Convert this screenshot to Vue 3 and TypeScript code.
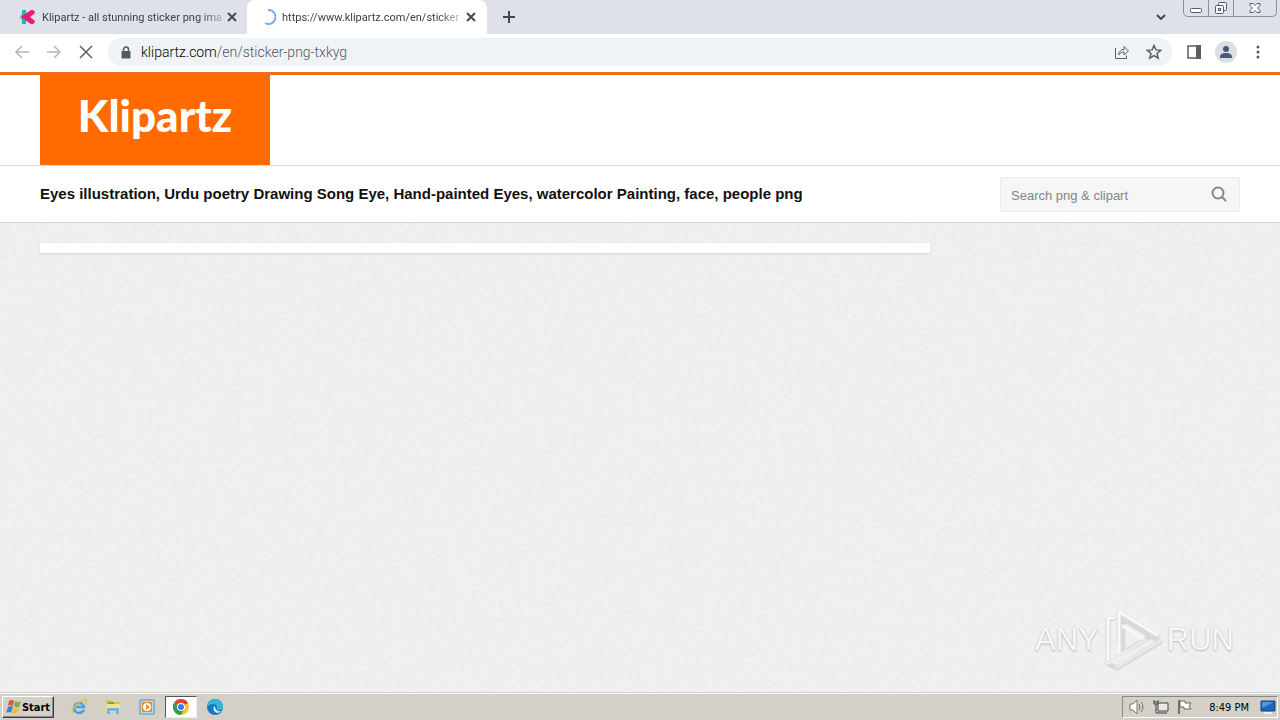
<script setup lang="ts">
import { ref } from 'vue'

const query = ref('')
const launchers = ['Internet Explorer', 'File Explorer', 'Media Player', 'Chrome', 'Edge']
</script>

<template>
  <div class="desktop">
    <header class="tabs">
      <div class="tab">
        <svg class="fav" viewBox="0 0 16 16"><path d="M2 1h4v14H2V11L0 8l2-3z" fill="#20b8b5" /><path d="M5 5 11 1h2q2 1 2 3l-5 4 5 4q0 2-2 3h-2L2 9V7z" fill="#ec1b7b" /></svg>
        <span class="tab-title">Klipartz - all stunning sticker png ima</span>
        <button class="close" aria-label="Close tab"><svg viewBox="0 0 10 10"><path d="m1 1 8 8M9 1 1 9" /></svg></button>
      </div>
      <div class="tab active">
        <svg class="fav" viewBox="0 0 16 16"><path d="M8 1a7 7 0 1 1-3 13" fill="none" stroke="#79a9e8" stroke-width="2" /></svg>
        <span class="tab-title">https://www.klipartz.com/en/sticker</span>
        <button class="close" aria-label="Close tab"><svg viewBox="0 0 10 10"><path d="m1 1 8 8M9 1 1 9" /></svg></button>
      </div>
      <button class="plus" aria-label="New tab"><svg viewBox="0 0 12 12"><path d="M6 0v12M0 6h12" /></svg></button>
      <button class="chev" aria-label="Search tabs"><svg viewBox="0 0 10 6"><path d="m1 1 4 4 4-4" /></svg></button>
      <div class="win">
        <button aria-label="Minimize"><svg viewBox="0 0 14 14"><rect x="1.500" y="7.500" width="11" height="4" rx="1" fill="#fff" stroke="#555b66" /></svg></button>
        <button aria-label="Restore"><svg viewBox="0 0 14 14"><g fill="#f5f6f8" stroke="#555b66"><rect x="4.500" y="1.500" width="8" height="8" rx="1" /><rect x="1.500" y="4.500" width="8" height="8" rx="1" /><rect x="4.500" y="7.500" width="2" height="2" /></g></svg></button>
        <button class="wide" aria-label="Close window"><svg viewBox="0 0 14 14"><path d="M2 2.500h3l2 2 2-2h3v2L9.500 7l2.500 2.500v2H9l-2-2-2 2H2v-2L4.500 7 2 4.500z" fill="#fff" stroke="#555b66" /></svg></button>
      </div>
    </header>

    <nav class="toolbar">
      <button class="nav dim" aria-label="Back"><svg viewBox="0 0 16 16"><path d="M15 8H2M8 2 2 8l6 6" /></svg></button>
      <button class="nav dim" aria-label="Forward"><svg viewBox="0 0 16 16"><path d="M1 8h13M8 2l6 6-6 6" /></svg></button>
      <button class="nav" aria-label="Stop"><svg viewBox="0 0 16 16"><path d="m2 2 12 12M14 2 2 14" /></svg></button>
      <div class="address">
        <svg class="lock" viewBox="0 0 10 13"><path d="M2.500 6V3.500a2.500 2.500 0 0 1 5 0V6" fill="none" stroke="#555960" stroke-width="1.500" /><rect x="0.500" y="5" width="9" height="7.500" rx="1" fill="#555960" /></svg>
        <a href="#" class="url"><b>klipartz.com</b>/en/sticker-png-txkyg</a>
        <button class="nav" aria-label="Share"><svg viewBox="0 0 16 16" class="thin"><path d="M1.500 4v10.500h11v-3M4.500 11C5 7 7 5.500 10 5.500V2.500L14.500 7 10 11V8C7.500 8 6 9 4.500 11z" /></svg></button>
        <button class="nav" aria-label="Bookmark"><svg viewBox="0 0 16 16"><path d="m8 1.500 1.900 4.400 4.800.4L11 9.400l1.200 4.700L8 11.600l-4.200 2.500L5 9.400 1.300 6.300l4.800-.4z" /></svg></button>
      </div>
      <button class="nav" aria-label="Side panel"><svg viewBox="0 0 16 16"><path d="M2 2h12v12H2z" /><path d="M10 1h5v14h-5z" fill="#5a5d63" stroke="none" /></svg></button>
      <button class="avatar" aria-label="Profile"><svg viewBox="0 0 22 22"><circle cx="11" cy="11" r="11" fill="#dbdfe5" /><circle cx="11" cy="8" r="3" fill="#4a5878" /><path d="M5 16q0-4 6-4t6 4v1H5z" fill="#4a5878" /></svg></button>
      <button class="nav" aria-label="Menu"><svg viewBox="0 0 16 16"><g fill="#55585e" stroke="none"><circle cx="8" cy="3" r="1.500" /><circle cx="8" cy="8" r="1.500" /><circle cx="8" cy="13" r="1.500" /></g></svg></button>
    </nav>

    <div class="brandbar"><a href="#" class="logo">Klipartz</a></div>
    <div class="titlebar">
      <h1>Eyes illustration, Urdu poetry Drawing Song Eye, Hand-painted Eyes, watercolor Painting, face, people png</h1>
      <form class="search" @submit.prevent>
        <input v-model="query" type="text" aria-label="Search png &amp; clipart" placeholder="Search png &amp; clipart" />
        <button aria-label="Search"><svg viewBox="0 0 16 16"><circle cx="7" cy="7" r="5.500" /><path d="m11 11 4 4" /></svg></button>
      </form>
    </div>

    <main>
      <svg class="grain" aria-hidden="true">
        <filter id="paper" x="0" y="0" width="100%" height="100%" color-interpolation-filters="sRGB">
          <feTurbulence type="fractalNoise" baseFrequency="0.25" numOctaves="3" seed="4" />
          <feColorMatrix values="0.040 0 0 0 0.918  0.040 0 0 0 0.918  0.040 0 0 0 0.918  0 0 0 0 1" />
        </filter>
        <rect width="100%" height="100%" filter="url(#paper)" />
      </svg>
      <div class="card"></div>
      <div class="watermark">
        <span>ANY</span>
        <svg viewBox="0 0 62 64">
          <g fill="none" stroke-linejoin="round" stroke-linecap="round">
            <g stroke="#d9d9d9" stroke-width="5"><path d="M17 34V5l38 23" /><path d="M11 11H6v45l9 4 43-26-37-23v34l28-17" /></g>
            <g stroke="#f8f8f8" stroke-width="3"><path d="M17 48V4l38 23" /><path d="M11 10H6v45l37-23-22-14" /></g>
            <g stroke="#e9e9e9" stroke-width="3"><path d="M15 59l43-26" /><path d="M6 54l37-22" /></g>
          </g>
        </svg>
        <span>RUN</span>
      </div>
    </main>

    <footer class="taskbar">
      <button class="start"><svg viewBox="0 0 16 16"><path d="M3 2q3-2 5 0L7 7Q4 5 2 7z" fill="#e9542b" /><path d="M9 2q3 2 6 0l-2 6q-3 1-5-1z" fill="#72b64a" /><path d="M2 8q3-2 5 0l-2 6q-2-2-5 0z" fill="#3b83d0" /><path d="M8 8q2 2 5 1l-2 5q-3 2-5 0z" fill="#f3bd25" /></svg>Start</button>
      <button v-for="(name, i) in launchers" :key="name" class="launch" :class="{ pressed: i === 3 }" :aria-label="name">
        <svg v-if="i === 0" viewBox="0 0 16 16"><path d="M13 11q-2 3-5 3a5 5 0 1 1 5-6H5" fill="none" stroke="#42a5e0" stroke-width="2.600" /><path d="M2 14Q-1 12 5 6q7-6 10-5 1 1-1 4" fill="none" stroke="#e9bd36" stroke-width="1.400" /></svg>
        <svg v-else-if="i === 1" viewBox="0 0 16 16"><path d="M1 1h5l1 2h8v10H1z" fill="#e3bd55" /><path d="M1 5h14v8H1z" fill="#f6e08b" /><path d="M2 15V9h12v6h-3v-3H5v3z" fill="#71b8dc" /><path d="M3 4h6" stroke="#59a967" stroke-width="2" /></svg>
        <svg v-else-if="i === 2" viewBox="0 0 16 16"><path d="M1 1h14v14H1z" fill="#b9dcf0" stroke="#4c91c0" /><path d="M3 3h10v10H3z" fill="#f18820" /><circle cx="8" cy="8" r="4" fill="#fff" /><path d="m7 5 4 3-4 3z" fill="#f18820" /></svg>
        <svg v-else-if="i === 3" viewBox="0 0 16 16"><circle cx="8" cy="8" r="8" fill="#f7c52c" /><path d="M8 8 1 4a8 8 0 0 1 14 0z" fill="#df4435" /><path d="M8 8 1 4a8 8 0 0 0 7 12l3-6z" fill="#2e9c56" /><circle cx="8" cy="8" r="4" fill="#fff" /><circle cx="8" cy="8" r="3" fill="#3f7de0" /></svg>
        <svg v-else viewBox="0 0 16 16"><circle cx="8" cy="8" r="8" fill="#1679bf" /><path d="M0 8a8 8 0 0 1 16 0q0 3-4 3-3 0-2-3 0-3-4-3-4 0-6 3z" fill="#35b5d4" /><path d="M7 7q-2 5 3 7 3 0 4-2-5 1-6-4z" fill="#dceef2" /></svg>
      </button>
      <div class="tray">
        <svg viewBox="0 0 16 16"><path d="M1 5h3l4-4v14l-4-4H1z" fill="#fff" stroke="#777" /><path d="M10 5q2 3 0 6m2-8q4 5 0 10" fill="none" stroke="#777" /></svg>
        <svg viewBox="0 0 16 16"><path d="M5 4h10v8H5z" fill="#e9e9e5" stroke="#444" /><path d="M7 14h7M1 1v4h4V1M3 5v9h4M1 3h4" fill="none" stroke="#444" /></svg>
        <svg viewBox="0 0 16 16"><path d="M2 1v14" stroke="#555" stroke-width="1.500" /><path d="M3 2h5v2h6l-2 3 2 3H7V8H3z" fill="#fff" stroke="#666" /></svg>
        <time>8:49 PM</time>
        <svg viewBox="0 0 16 16"><path d="M1 2h14v10H1z" fill="#1b65bd" stroke="#18427e" /><path d="M2 3h12L2 9z" fill="#5595dc" /><path d="M4 14h8" stroke="#eee" stroke-width="2" /></svg>
      </div>
    </footer>
  </div>
</template>

<style>
body { margin: 0; }
</style>

<style scoped>
* { box-sizing: border-box; }
button { border: 0; padding: 0; background: none; font: inherit; color: inherit; display: flex; align-items: center; justify-content: center; flex: none; }
svg { display: block; flex: none; }
.desktop { min-height: 100vh; display: flex; flex-direction: column; font-family: "Liberation Sans", Arial, sans-serif; background: #fff; }
.tabs { height: 34px; background: #dee1e8; display: flex; align-items: flex-start; padding-right: 3px; font: 11px Roboto, sans-serif; color: #3d4046; }
.tab { height: 34px; width: 240px; display: flex; align-items: center; padding: 0 10px 0 13px; border-radius: 8px 8px 0 0; }
.tab:first-child { width: 247px; padding: 0 9px 0 20px; }
.tab.active { background: #fff; }
.fav { width: 16px; height: 16px; }
.tab-title { margin: 0 auto 0 6px; white-space: nowrap; mask-image: linear-gradient(90deg, #000 88%, rgba(0, 0, 0, 0.3)); }
.close { width: 12px; height: 12px; }
.close svg { width: 10px; height: 10px; }
.close svg, .plus svg, .chev svg { fill: none; stroke: #44474d; stroke-width: 2; }
.plus { width: 44px; height: 34px; }
.plus svg { width: 12px; height: 12px; }
.chev { width: 24px; height: 34px; margin-left: auto; margin-right: 10px; }
.chev svg { width: 10px; height: 6px; }
.win { display: flex; height: 17px; border: 1px solid #8b9098; border-top: 0; border-radius: 0 0 5px 5px; }
.win button { width: 25px; border-right: 1px solid #8b9098; }
.win .wide { width: 42px; border-right: 0; }
.win svg { width: 14px; height: 14px; }
.toolbar { height: 38px; display: flex; align-items: center; padding: 0 14px 2px; gap: 16px; }
.nav { width: 16px; height: 16px; }
.nav svg { width: 16px; height: 16px; fill: none; stroke: #5a5d63; stroke-width: 1.500; }
.nav svg.thin { stroke-width: 1; }
.dim svg { stroke: #b4b6b9; }
.address { flex: 1; min-width: 0; height: 28px; margin: 0 -2px; border-radius: 14px; background: #f0f3f6; display: flex; align-items: center; gap: 16px; padding: 0 10px 0 13px; }
.lock { width: 10px; height: 13px; }
.url { flex: 1; margin-left: -6px; font: 300 14px Roboto, sans-serif; color: #4f565e; text-decoration: none; white-space: nowrap; }
.url b { font-weight: 300; color: #000; }
.avatar { margin: 0 -3px; }
.avatar svg { width: 22px; height: 22px; }
.brandbar { border-top: 3px solid #f26d16; border-bottom: 1px solid #ddd; padding: 0 40px; height: 94px; display: flex; }
.logo { width: 230px; background: #ff6b00; color: #fff; font: 900 44px/80px Lato, sans-serif; text-align: center; text-decoration: none; }
.titlebar { height: 57px; padding: 0 40px; border-bottom: 1px solid #d7d7d7; display: flex; align-items: center; justify-content: space-between; gap: 20px; }
h1 { margin: 0; font: bold 15px/20px "Liberation Sans", Arial, sans-serif; color: #111; }
.search { display: flex; width: 240px; height: 35px; border: 1px solid #ebebeb; border-radius: 2px; background: #f6f6f6; flex: none; }
.search input { flex: 1; min-width: 0; border: 0; outline: 0; background: none; padding: 2px 10px 0; font: 13px "Liberation Sans", Arial, sans-serif; color: #555; }
.search input::placeholder { color: #858585; opacity: 1; }
.search button { width: 40px; }
.search svg { width: 16px; height: 16px; fill: none; stroke: #85858e; stroke-width: 2; }
main { flex: 1; position: relative; display: flex; flex-direction: column; justify-content: space-between; padding: 20px 46px 20px 40px; background: #efefef; }
.grain { position: absolute; inset: 0; width: 100%; height: 100%; }
.card { position: relative; width: calc(100% - 304px); height: 10px; background: #fff; box-shadow: 0 1px 2px #d4d4d4; }
.watermark { position: relative; align-self: flex-end; display: flex; align-items: center; gap: 3px; font: 31px "Liberation Sans", sans-serif; color: #f7f7f7; text-shadow: 0 1px 2px #bbb, 0 0 2px #ccc; }
.watermark svg { width: 62px; height: 64px; }
.taskbar { height: 28px; background: #d4d0c8; border-top: 1px solid #d4d0c8; box-shadow: inset 0 1px #fff; display: flex; align-items: center; padding: 1px 2px 0; }
.start { width: 52px; height: 22px; border: 1px solid; border-color: #fff #404040 #404040 #fff; box-shadow: inset -1px -1px #888; font: bold 11px "DejaVu Sans Condensed", sans-serif; color: #000; margin-right: 9px; }
.start svg { width: 16px; height: 16px; }
.launch { width: 32px; height: 22px; margin-right: 2px; }
.launch svg { width: 16px; height: 16px; }
.pressed { background: #fff; border: 1px solid; border-color: #555 #eee #eee #555; }
.tray { margin-left: auto; width: 156px; height: 22px; border: 1px solid; border-color: #888 #fff #fff #888; padding: 0 1px 0 6px; display: flex; align-items: center; gap: 8px; font: 11px "DejaVu Sans Condensed", sans-serif; color: #000; }
.tray svg { width: 16px; height: 16px; }
.tray time { margin: 0 3px 0 auto; white-space: nowrap; }
</style>
